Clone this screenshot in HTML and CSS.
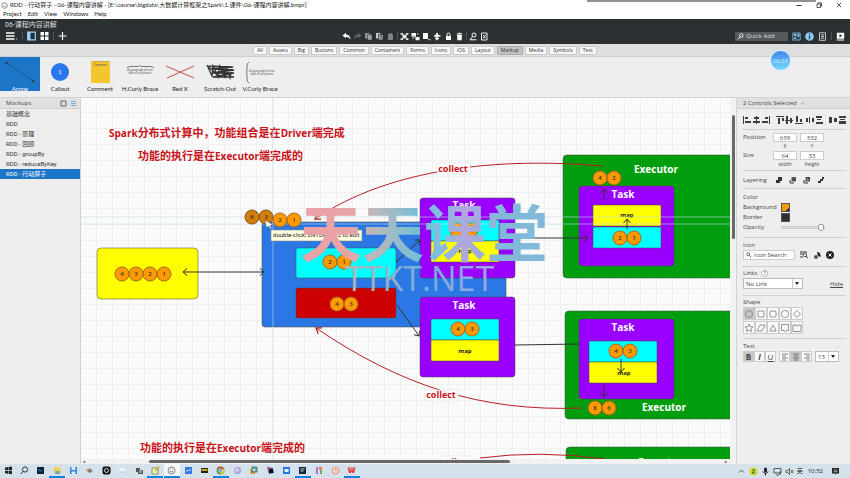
FILE: index.html
```html
<!DOCTYPE html>
<html lang="zh-CN">
<head>
<meta charset="utf-8">
<title>RDD - 行动算子</title>
<link rel="stylesheet" href="styles.css">
</head>
<body>
<header class="titlebar">
  <svg class="app-icon" viewBox="0 0 8 8"><circle cx="4" cy="4" r="3.3" fill="none" stroke="#666" stroke-width=".8"/><path d="M2.5 4.6q1.5 1.4 3 0M2.8 3h.4M4.9 3h.4" fill="none" stroke="#555" stroke-width=".7"/></svg>
  <span class="window-name">RDD - 行动算子 - 06-课程内容讲解 - [E:\course\bigdata\大数据计算框架之Spark\1.课件\06-课程内容讲解.bmpr]</span>
  <span class="top-line"></span>
  <div class="window-buttons">
    <button aria-label="Minimize"><svg viewBox="0 0 6 6"><path d="M.5 3.5h5" stroke="#333"/></svg></button>
    <button aria-label="Restore"><svg viewBox="0 0 6 6"><path d="M1 2h3.500v3.500H1zM2 2V.8h3.500v3.500H4.500" fill="none" stroke="#333" stroke-width=".8"/></svg></button>
    <button aria-label="Close"><svg viewBox="0 0 6 6"><path d="M.8.8l4.400 4.400M5.200.8L.8 5.200" stroke="#333" stroke-width=".8"/></svg></button>
  </div>
</header>
<nav class="menubar"><a href="#">Project</a><a href="#">Edit</a><a href="#">View</a><a href="#">Windows</a><a href="#">Help</a></nav>

<section class="toolbar">
  <h1>06-课程内容讲解</h1>
  <div class="tool-row">
    <div class="tools tools-left">
      <button aria-label="Menu"><svg width="12" height="10" viewBox="0 0 12 10"><path d="M0 2h8.500M0 5h8.500M0 8h8.500" stroke="#fff" stroke-width="1.600"/><path d="M9.500 7.500h2l-1 1.200z" fill="#ccc"/></svg></button>
      <i class="sep"></i>
      <button aria-label="Navigator"><svg width="9" height="10" viewBox="0 0 9 10"><path d="M.7 1.200h7.600v7.600H.7z" fill="#1e303b" stroke="#9bd2f5" stroke-width="1.200"/><path d="M1 1h2.500v8H1z" fill="#9bd2f5"/></svg></button>
      <button aria-label="Grid view"><svg width="9" height="10" viewBox="0 0 9 10" fill="#fff"><path d="M.5 1h3.500v3.500H.5zM5 1h3.500v3.500H5zM.5 5.500h3.500V9H.5zM5 5.500h3.500V9H5z"/></svg></button>
      <i class="sep"></i>
      <button aria-label="Add"><svg width="9" height="10" viewBox="0 0 9 10"><path d="M4.500 1v8M.5 5h8" stroke="#fff" stroke-width="1.200"/></svg></button>
    </div>
    <div class="tools tools-mid">
      <button aria-label="Undo"><svg viewBox="0 0 9 9"><path d="M.5 3.500L4 .8v1.700q4 .2 4.600 5Q6.800 4.800 4 4.800v1.500z" fill="#fff"/></svg></button>
      <button aria-label="Redo"><svg viewBox="0 0 9 9"><path d="M8.500 3.500L5 .8v1.700q-4 .2-4.600 5Q2.200 4.800 5 4.800v1.500z" fill="#62676b"/></svg></button>
      <button aria-label="Copy"><svg viewBox="0 0 9 9"><path d="M1 1h4.500v5.500H1z" fill="#8e9295"/><path d="M3.500 2.500H8V8H3.500z" fill="#9da1a3" stroke="#2b3033" stroke-width=".5"/></svg></button>
      <button aria-label="Paste"><svg viewBox="0 0 9 9"><path d="M1 1h4.500v5.500H1z" fill="#c5c7c8"/><path d="M3.500 2.500H8V8H3.500zM5 4h2M5 6h2" fill="#aaa" stroke="#2b3033" stroke-width=".7"/></svg></button>
      <button aria-label="Clipboard"><svg viewBox="0 0 9 9"><path d="M2 2h5v6H2zM3.500 1h2v1h-2z" fill="#7d8285"/></svg></button>
      <i class="sep"></i>
      <button aria-label="Group"><svg viewBox="0 0 9 9"><path d="M.5 1H3v1.500H.5zM6 1h2.500v1.500H6zM.5 6.500H3V8H.5zM6 6.500h2.500V8H6zM2.500 2.500h4v4h-4z" fill="#ddd"/><path d="M1 2l7 5.500M8 2L1 7.500" stroke="#fff" stroke-width=".6"/></svg></button>
      <button aria-label="Ungroup"><svg viewBox="0 0 9 9"><path d="M.5 1h4.500v3.500H.5zM4.500 5h4v3.200h-4z" fill="#fff"/><path d="M2 3l4 3.500M1 6h2M6 2h1.500" stroke="#ddd"/></svg></button>
      <button aria-label="Arrange"><svg viewBox="0 0 9 9"><path d="M1 1h5v6H1z" fill="#fff"/><path d="M6 7h2.500v1.200H6z" fill="#bbb"/></svg></button>
      <button aria-label="Align"><svg viewBox="0 0 9 9"><path d="M4 .8v7.500M1 4h6.500M2 6.500h4" stroke="#fff" stroke-width="1.300"/><circle cx="4" cy="3" r="1.500" fill="#fff"/></svg></button>
      <button aria-label="Lock"><svg viewBox="0 0 9 9"><path d="M2 4h5v4H2z" fill="#fff"/><path d="M3 4V2.500a1.500 1.500 0 013 0V4" fill="none" stroke="#fff"/></svg></button>
      <button aria-label="Delete"><svg viewBox="0 0 9 9"><path d="M2 3h5l-.4 5.200H2.400zM1.700 1.600h5.600v.9H1.700zM3.500.8h2v1h-2z" fill="#fff"/></svg></button>
      <i class="sep"></i>
      <button aria-label="Find"><svg viewBox="0 0 9 9"><circle cx="5" cy="3" r="2" fill="none" stroke="#fff"/><path d="M3.500 4.500L1 7.800h6.500" fill="none" stroke="#fff"/></svg></button>
      <button aria-label="Check"><svg viewBox="0 0 9 9"><path d="M1.500 1h5.500v7H1.500zM3 3l2.500 3M6 2.500L3 6.500" fill="none" stroke="#fff" stroke-width=".9"/></svg></button>
    </div>
    <div class="tools tools-right">
      <label class="quick-add"><svg viewBox="0 0 8 8"><circle cx="5" cy="3" r="2" fill="none" stroke="#fff"/><path d="M3.500 4.500L.8 7.300" stroke="#fff"/></svg><input aria-label="Quick Add" placeholder="Quick Add"></label>
      <button aria-label="Library"><svg viewBox="0 0 9 9"><path d="M.8 1h7.400v7H.8z" fill="#233947" stroke="#8cc8f0" stroke-width=".8"/><path d="M2 2h2.500v2H2zM5.500 2h1.800v3H5.500zM2 5.200h2.500v1.600H2z" fill="#8cc8f0"/></svg></button>
      <button aria-label="Inspector"><svg viewBox="0 0 9 9"><circle cx="4.500" cy="4.500" r="4.300" fill="#8ccaf4"/><path d="M4.500 3.600v3.600M4.500 1.600v1.200" stroke="#24445c" stroke-width="1.200"/></svg></button>
      <button aria-label="Notes"><svg viewBox="0 0 9 9"><path d="M1.500.8h6v7.500h-6zM3 3h3M3 4.600h3M3 6.200h3" fill="none" stroke="#eee" stroke-width=".8"/></svg></button>
      <i class="sep"></i>
      <button aria-label="Present"><svg viewBox="0 0 9 9"><path d="M.8.8h7.400v5.900H.8zM.8 7.400h7.400v1H.8z" fill="#fff"/><path d="M3.500 2v3.500l2.700-1.700z" fill="#222"/></svg></button>
    </div>
  </div>
</section>

<nav class="categories">
  <button>All</button><button>Assets</button><button>Big</button><button>Buttons</button><button>Common</button><button>Containers</button><button>Forms</button><button>Icons</button><button>iOS</button><button>Layout</button><button class="active">Markup</button><button>Media</button><button>Symbols</button><button>Text</button>
</nav>

<section class="gallery">
  <button class="active"><svg viewBox="0 0 40 28"><path d="M6 6l27 18" stroke="#234f78" stroke-width=".8"/><circle cx="6.500" cy="6" r="1.300" fill="#24405c"/><circle cx="33" cy="24" r="1.300" fill="#24405c"/></svg><span>Arrow</span></button>
  <button><svg viewBox="0 0 40 28"><circle cx="20" cy="15" r="9" fill="#2a76ea"/><text x="20" y="17" class="tiny white">1</text></svg><span>Callout</span></button>
  <button><svg viewBox="0 0 40 28"><path d="M11 4h19v22H11z" fill="#f3c62f"/><path d="M12 4h17v1H12z" fill="#c9a94a"/><text x="20" y="9" class="micro">Comment</text></svg><span>Comment</span></button>
  <button><svg viewBox="0 0 40 28"><path d="M7 11q1-1.500 4-1.500h6q3 0 3-1 0 1 3 1h7q3 0 4 1.500" fill="none" stroke="#555" stroke-width=".8"/><text x="20" y="14" class="micro">A paragraph of text</text><text x="20" y="17" class="micro">with a curly brace</text></svg><span>H.Curly Brace</span></button>
  <button><svg viewBox="0 0 40 28"><path d="M6 9l28 12M7 21L34 9" stroke="#d04a4a" stroke-width="1"/></svg><span>Red X</span></button>
  <button><svg viewBox="0 0 40 28"><path d="M7 9l26 1-23 2 24 1-22 3 22 0-21 4 21 0M7 8l5 11 1-10 5 11 2-11 5 12 1-11 4 11 2-9M9 10l8 8M18 9l9 11" fill="none" stroke="#333" stroke-width="1.300"/></svg><span>Scratch-Out</span></button>
  <button><svg viewBox="0 0 40 28"><path d="M9 5q-2 1-2 4v3q0 3-1 3 1 0 1 3v4q0 3 2 4" fill="none" stroke="#555" stroke-width=".8"/><text x="22" y="15" class="micro">A paragraph of text</text><text x="22" y="18" class="micro">with a curly brace</text></svg><span>V.Curly Brace</span></button>
  <div class="timer">06:35</div>
</section>

<main class="workspace">
  <aside class="mockups">
    <header class="panel-head"><h2>Mockups</h2>
      <button aria-label="Thumbnails"><svg viewBox="0 0 7 7"><path d="M1 1h5v5H1z" fill="none" stroke="#444" stroke-width=".8"/></svg></button>
      <button aria-label="List"><svg viewBox="0 0 7 7"><path d="M1 1.500h5M1 3.500h5M1 5.500h5" stroke="#5ba0e0" stroke-width=".8"/></svg></button>
    </header>
    <ul><li><a href="#">基础概念</a></li><li><a href="#">RDD</a></li><li><a href="#">RDD - 原理</a></li><li><a href="#">RDD - 回顾</a></li><li><a href="#">RDD - groupBy</a></li><li><a href="#">RDD - reduceByKey</a></li><li><a href="#" class="active">RDD - 行动算子</a></li></ul>
  </aside>

  <section class="canvas-area">
    <svg class="canvas" aria-label="Spark diagram">
      <defs>
        <pattern id="grid" width="16" height="16" patternUnits="userSpaceOnUse"><path d="M5.500 0v16M10.500 0v16M0 5.500h16M0 10.500h16" stroke="#f7f8f8"/><path d="M.5 0v16M0 .5h16" stroke="#f0f2f2"/></pattern>
        <marker id="tip" viewBox="0 0 8 8" refX="6.500" refY="4" markerWidth="8" markerHeight="8" markerUnits="userSpaceOnUse" orient="auto-start-reverse"><path d="M2.500.5l4 3.500-4 3.500" fill="none" stroke="#333"/></marker>
        <marker id="red-tip" viewBox="0 0 8 8" refX="6.500" refY="4" markerWidth="8" markerHeight="8" markerUnits="userSpaceOnUse" orient="auto-start-reverse"><path d="M1.500.5l5 3.500-5 3.500" fill="none" stroke="#b81e24" stroke-width="1.300"/></marker>
        <linearGradient id="brand" gradientUnits="userSpaceOnUse" x1="300" y1="0" x2="550" y2="0"><stop offset="0" stop-color="#eba0a4"/><stop offset=".2" stop-color="#e8a4a8"/><stop offset=".3" stop-color="#b9b9bb"/><stop offset=".48" stop-color="#72bfd7"/><stop offset=".56" stop-color="#86bce0"/><stop offset=".66" stop-color="#b3a6df"/><stop offset=".8" stop-color="#82b9d8"/><stop offset="1" stop-color="#82b9d8"/></linearGradient>
        <linearGradient id="site" gradientUnits="userSpaceOnUse" x1="345" y1="0" x2="505" y2="0"><stop offset="0" stop-color="#b5b5b9"/><stop offset=".5" stop-color="#72aedd"/><stop offset="1" stop-color="#a9a2e4"/></linearGradient>
      </defs>
      <g transform="translate(-81 -98)">
        <rect x="81" y="98" width="2000" height="2000" fill="url(#grid)"/>
        <g class="note">
          <text x="109" y="137"><tspan class="latin">Spark</tspan>分布式计算中，功能组合是在<tspan class="latin">Driver</tspan>端完成</text>
          <text x="138" y="160">功能的执行是在<tspan class="latin">Executor</tspan>端完成的</text>
          <text x="140" y="452">功能的执行是在<tspan class="latin">Executor</tspan>端完成的</text>
        </g>
        <rect class="box yellow" x="97" y="248" width="101" height="51" rx="4"/>
        <g class="ball"><circle cx="122" cy="274" r="7"/><text x="122" y="276">4</text><circle cx="136" cy="274" r="7"/><text x="136" y="276">3</text><circle cx="150" cy="274" r="7"/><text x="150" y="276">2</text><circle cx="164" cy="274" r="7"/><text x="164" y="276">1</text></g>
        <rect class="box blue" x="262" y="222" width="244" height="105" rx="3"/>
        <rect class="box cyan" x="296" y="248" width="100" height="30" rx="2"/>
        <rect class="box red" x="296" y="288" width="100" height="30" rx="2"/>
        <g class="ball"><circle cx="330" cy="262" r="7"/><text x="330" y="264">2</text><circle cx="344" cy="262" r="7"/><text x="344" y="264">1</text><circle cx="337" cy="304" r="7"/><text x="337" y="306">4</text><circle cx="351" cy="304" r="7"/><text x="351" y="306">3</text></g>

        <rect class="box purple" x="420" y="198" width="95" height="80" rx="3"/>
        <text class="label" x="464" y="209">Task</text>
        <rect class="box cyan" x="431" y="220" width="68" height="21" rx="1"/><rect class="box yellow" x="431" y="241" width="68" height="21" rx="1"/>
        <g class="ball"><circle cx="457" cy="230" r="7"/><text x="457" y="232">2</text><circle cx="471" cy="230" r="7"/><text x="471" y="232">1</text></g>
        <text class="map" x="465" y="253">map</text>
        <rect class="box purple" x="420" y="297" width="95" height="80" rx="3"/>
        <text class="label" x="464" y="309">Task</text>
        <rect class="box cyan" x="431" y="319" width="68" height="21" rx="1"/><rect class="box yellow" x="431" y="340" width="68" height="21" rx="1"/>
        <g class="ball"><circle cx="458" cy="329" r="7"/><text x="458" y="331">4</text><circle cx="472" cy="329" r="7"/><text x="472" y="331">3</text></g>
        <text class="map" x="465" y="353">map</text>

        <rect class="box green" x="563" y="155" width="2000" height="123" rx="4"/>
        <text class="label" x="656" y="173">Executor</text>
        <g class="ball"><circle cx="600" cy="178" r="7"/><text x="600" y="180">4</text><circle cx="614" cy="178" r="7"/><text x="614" y="180">2</text></g>
        <rect class="box purple" x="579" y="186" width="95" height="80" rx="3"/>
        <text class="label" x="623" y="198">Task</text>
        <rect class="box yellow" x="593" y="205" width="68" height="21" rx="1"/><rect class="box cyan" x="593" y="227" width="68" height="21" rx="1"/>
        <g class="ball"><circle cx="620" cy="238" r="7"/><text x="620" y="240">2</text><circle cx="634" cy="238" r="7"/><text x="634" y="240">1</text></g>
        <text class="map" x="627" y="217">map</text>

        <rect class="box green" x="565" y="311" width="2000" height="108" rx="4"/>
        <rect class="box purple" x="579" y="319" width="95" height="80" rx="3"/>
        <text class="label" x="623" y="331">Task</text>
        <rect class="box cyan" x="589" y="341" width="68" height="21" rx="1"/><rect class="box yellow" x="589" y="362" width="68" height="21" rx="1"/>
        <g class="ball"><circle cx="616" cy="351" r="7"/><text x="616" y="353">4</text><circle cx="630" cy="351" r="7"/><text x="630" y="353">3</text><circle cx="595" cy="408" r="7"/><text x="595" y="410">8</text><circle cx="609" cy="408" r="7"/><text x="609" y="410">6</text></g>
        <text class="map" x="624" y="375">map</text>
        <text class="label" x="664" y="411">Executor</text>
        <rect class="box green" x="566" y="447" width="2000" height="108" rx="4"/>
        <text class="label" x="660" y="466">Executor</text>

        <g class="link">
          <path d="M183 272H264" marker-start="url(#tip)" marker-end="url(#tip)"/>
          <path d="M396 262L420 240" marker-end="url(#tip)"/><path d="M397 305L419 336" marker-end="url(#tip)"/>
          <path d="M515 238H588" marker-end="url(#tip)"/><path d="M515 345L580 344"/>
          <path d="M627 229V219" marker-end="url(#tip)"/><path d="M604 200V189" marker-end="url(#tip)"/>
          <path d="M621 359V372" marker-end="url(#tip)"/><path d="M604 384V397" marker-end="url(#tip)"/>
        </g>
        <g class="collect">
          <path d="M602 166C500 157 390 168 315 219" marker-end="url(#red-tip)"/>
          <path d="M582 408C480 412 400 385 316 328" marker-end="url(#red-tip)"/>
          <path d="M480 458Q540 450 605 459"/>
          <rect x="437" y="163" width="33" height="11"/><text x="453" y="172">collect</text>
          <rect x="425" y="390" width="33" height="11"/><text x="441" y="398">collect</text>
          <rect x="441" y="456" width="31" height="11"/><text x="456" y="465">collect</text>
        </g>
        <path class="guide" d="M81 217H2000M81 224H2000M273 98V2000"/>
        <g class="ball selected"><circle cx="252" cy="217" r="7"/><text x="252" y="219">6</text><circle cx="266" cy="217" r="7"/><text x="266" y="219">3</text></g>
        <g class="ball"><circle cx="280" cy="220" r="7"/><text x="280" y="222">2</text><circle cx="294" cy="220" r="7"/><text x="294" y="222">1</text></g>
        <path d="M265 220l8 5-3 .5 2 3-1.500.5-2-3-2 2z" fill="#fff" stroke="#456" stroke-width=".5"/>
        <rect class="tip" x="271" y="230" width="91" height="11"/><text class="tip-text" x="273" y="237">double-click, ENTER or F2 to edit</text>
        <text class="brand" x="300" y="257">天天课堂</text>
        <text class="site" x="345" y="291">TTKT.NET</text>
      </g>
    </svg>
    <div class="scroll-y"><i></i></div>
    <div class="scroll-x"><b>◂</b><i></i><b>▸</b></div>
  </section>

  <aside class="inspector">
    <header class="panel-head"><h2>2 Controls Selected</h2><svg class="chevron" viewBox="0 0 5 5"><path d="M1 2l1.500 1L4 2" fill="none" stroke="#888" stroke-width=".7"/></svg></header>
    <section class="aligns">
      <svg viewBox="0 0 104 9" fill="#3a3f42"><path d="M0 0h1v8H0zM2 1h3v2H2zM2 5h6v2H2zM13 0h1v8h-1zM11 1h5v2h-5zM10 5h7v2h-7zM26 0h1v8h-1zM22 1h3v2h-3zM19 5h6v2h-6zM33 0h8v1h-8zM35 2h2v6h-2zM39 2h2v3h-2zM42 4h8v1h-8zM43 0h2v8h-2zM47 2h2v5h-2zM52 7h8v1h-8zM53 0h2v6h-2zM57 3h2v3h-2zM63 2h2v4h-2zM66 1h1v6h-1zM69 2h2v4h-2zM73 0h6v2h-6zM74 3h4v1h-4zM73 6h7v2h-7zM86 1h3v6h-3zM91 2h3v4h-3zM96 0h7v2h-7zM97 3h5v1h-5zM96 5h7v3h-7z"/></svg>
    </section>
    <section class="geometry">
      <span>Position</span><label><input value="639">X</label><label><input value="332">Y</label>
      <span>Size</span><label><input value="64">width</label><label><input value="33">height</label>
    </section>
    <section class="layering"><span>Layering</span>
      <button aria-label="To front"><svg viewBox="0 0 8 8"><path d="M3 1h4v4H3zM1 4h2v1h2v2H1z" fill="#333"/></svg></button>
      <button aria-label="Forward"><svg viewBox="0 0 8 8"><path d="M2.500 1H7v4.500H2.500z" fill="#555"/><path d="M1 4v3h4M4 3.500h2" fill="none" stroke="#333"/></svg></button>
      <button aria-label="Backward"><svg viewBox="0 0 8 8"><path d="M2.500 1H7v4.500H2.500z" fill="#444"/><path d="M1 4v3h4" fill="none" stroke="#333"/><path d="M4 2v2h2" stroke="#ddd" fill="none" stroke-width=".6"/></svg></button>
      <button aria-label="To back"><svg viewBox="0 0 8 8"><path d="M5 1h2v2H5zM3 3h3v2H3zM1 5h3v2H1z" fill="#333"/></svg></button>
    </section>
    <section class="colors">
      <h3>Color</h3>
      <div><span>Background</span><button class="swatch orange" aria-label="Background color"></button></div>
      <div><span>Border</span><button class="swatch dark" aria-label="Border color"></button></div>
      <div><label for="opacity">Opacity</label><input id="opacity" type="range" value="100"></div>
    </section>
    <section class="icons"><h3>Icon</h3>
      <div><label class="search"><svg viewBox="0 0 8 8"><circle cx="3" cy="3" r="2" fill="none" stroke="#333"/><path d="M4.500 4.500L7 7" stroke="#333"/></svg><input aria-label="Icon Search" placeholder="Icon Search"></label>
      <svg viewBox="0 0 8 8"><path d="M0 1h7M0 3h3M0 6h3" stroke="#333"/><circle cx="5" cy="4" r="1.700" fill="none" stroke="#333" stroke-width=".8"/><path d="M6 5l2 2.500" stroke="#333"/></svg>
      <svg viewBox="0 0 8 8"><circle cx="3" cy="6" r="2" fill="#555"/><path d="M4 1q4 0 3.500 5L5 5z" fill="#222"/></svg>
      <svg viewBox="0 0 8 8"><circle cx="4" cy="4" r="4" fill="#222"/><path d="M2.500 2.500l3 3M5.500 2.500l-3 3" stroke="#fff"/></svg></div>
    </section>
    <section class="links"><h3>Links <button aria-label="Help">?</button></h3>
      <div><span class="select"><select aria-label="Link"><option>No Link</option></select></span><a href="#">Hide</a></div>
    </section>
    <section class="shapes"><h3>Shape</h3>
      <div class="shape-grid">
        <button class="active" aria-label="Circle"><svg viewBox="0 0 10 10"><circle cx="5" cy="5" r="3.500"/></svg></button>
        <button aria-label="Square"><svg viewBox="0 0 10 10"><path d="M2 2h6v6H2z"/></svg></button>
        <button aria-label="Rounded square"><svg viewBox="0 0 10 10"><rect x="2" y="2" width="6" height="6" rx="1"/></svg></button>
        <button aria-label="Rounded"><svg viewBox="0 0 10 10"><rect x="1.500" y="1.500" width="7" height="7" rx="3"/></svg></button>
        <button aria-label="Diamond"><svg viewBox="0 0 10 10"><path d="M5 1.500L8.500 5 5 8.500 1.500 5z"/></svg></button>
        <button aria-label="Star"><svg viewBox="0 0 10 10"><path d="M5 1l1.100 2.700 2.900.2-2.200 1.900.7 2.900L5 7.100 2.500 8.700l.7-2.900L1 3.900l2.900-.2z"/></svg></button>
        <button aria-label="Parallelogram"><svg viewBox="0 0 10 10"><path d="M4 2h5L6 8H1z"/></svg></button>
        <button aria-label="Triangle"><svg viewBox="0 0 10 10"><path d="M5 2l3.200 6H1.800z"/></svg></button>
        <button aria-label="Speech"><svg viewBox="0 0 10 10"><path d="M1.500 1.500h7v6H7L5.500 8.500 4 7.500H1.500z"/></svg></button>
        <button aria-label="Folder"><svg viewBox="0 0 10 10"><path d="M1 2h3l1 1.500L6 2h3v6.500H1z"/></svg></button>
      </div>
    </section>
    <section class="text-tools"><h3>Text</h3>
      <div>
        <div class="group"><button class="active"><b>B</b></button><button class="italic"><em>I</em></button><button><u>U</u></button></div>
        <div class="group"><button aria-label="Left"><svg viewBox="0 0 8 8"><path d="M1 1h6M1 3h4M1 5h6M1 7h4"/></svg></button><button class="active" aria-label="Center"><svg viewBox="0 0 8 8"><path d="M1 1h6M2 3h4M1 5h6M2 7h4"/></svg></button><button aria-label="Right"><svg viewBox="0 0 8 8"><path d="M1 1h6M3 3h4M1 5h6M3 7h4"/></svg></button></div>
        <span class="select small"><select aria-label="Text size"><option>13</option></select></span>
      </div>
    </section>
  </aside>
</main>

<footer class="taskbar">
  <div class="apps">
    <button aria-label="Start"><svg viewBox="0 0 9 9" fill="#222"><path d="M1 1.500l3-.4v3H1zM4.500 1L8 .6v3.500H4.500zM1 4.700h3v3l-3-.4zM4.500 4.700H8v3.500l-3.500-.4z"/></svg></button>
    <button aria-label="Search"><svg viewBox="0 0 9 9"><circle cx="5" cy="3.500" r="2.600" fill="none" stroke="#333"/><path d="M3 5.500L.8 8" stroke="#333"/></svg></button>
    <button aria-label="Photoshop"><svg viewBox="0 0 9 9"><path d="M1 1h7v7H1z" fill="#08253c"/><text x="4" y="6" class="micro cyan-text">Ps</text></svg></button>
    <button class="open" aria-label="Files"><svg viewBox="0 0 9 9"><path d="M1 1h3l1 1h3v6H1z" fill="#eed24d"/><path d="M2.500 5h4v3h-4z" fill="#5ba6d8"/></svg></button>
    <button aria-label="Save"><svg viewBox="0 0 9 9"><path d="M1 1h7v7H1z" fill="#3385d6"/><path d="M2.500 1h4v3h-4zM2.500 5.500h4V8h-4z" fill="#d5eaff"/></svg></button>
    <button aria-label="Paint"><svg viewBox="0 0 9 9"><path d="M1 4l4-2 3 3-4 2z" fill="#d48b46"/><circle cx="5" cy="5" r="1.500" fill="#4c82b8"/></svg></button>
    <button aria-label="Unity"><svg viewBox="0 0 9 9"><rect x=".5" y=".5" width="8" height="8" rx="2" fill="#111"/><circle cx="4.500" cy="4.500" r="2" fill="none" stroke="#ddd"/></svg></button>
    <button aria-label="Cloud"><svg viewBox="0 0 9 9"><ellipse cx="4.500" cy="4" rx="3.500" ry="2" fill="#eef3f6"/><path d="M2 6h5" stroke="#bac6cf"/></svg></button>
    <button aria-label="Camera"><svg viewBox="0 0 9 9"><path d="M1 2h4v2h3v4H3V6H1z" fill="#555"/><circle cx="5.500" cy="5.500" r="1.500" fill="#aaa"/></svg></button>
    <button class="open" aria-label="Notes"><svg viewBox="0 0 9 9"><path d="M1 2h6v6H1z" fill="#f4f4c7" stroke="#7b9858"/><path d="M8 .5L4 5" stroke="#d2a62b" stroke-width="1.500"/></svg></button>
    <button class="open current" aria-label="Balsamiq"><svg viewBox="0 0 9 9"><circle cx="4.500" cy="4.500" r="3.500" fill="none" stroke="#666" stroke-width=".8"/><path d="M2.500 5q2 2 4 0M3 3.200h.7M5.300 3.200H6" fill="none" stroke="#666" stroke-width=".8"/></svg></button>
    <button aria-label="Documents"><svg viewBox="0 0 9 9"><path d="M1 1h7v7H1z" fill="#3a78df"/><path d="M2 6l2-2 1 1 2-2" fill="none" stroke="#c3dcff"/></svg></button>
    <button aria-label="Terminal"><svg viewBox="0 0 9 9"><path d="M1 2h7v5H1z" fill="#28240c"/><path d="M1.500 3h6v2h-6z" fill="#c8a623"/></svg></button>
    <button class="open" aria-label="Chrome"><svg viewBox="0 0 9 9"><circle cx="4.500" cy="4.500" r="4" fill="#43a853"/><path d="M1 2.500a4 4 0 017 0l-3.500 1z" fill="#dc493d"/><path d="M8 2.500A4 4 0 014.500 8.500l1-4z" fill="#edc52f"/><circle cx="4.500" cy="4.500" r="1.700" fill="#4d8df0" stroke="#fff" stroke-width=".6"/></svg></button>
    <button aria-label="Browser"><svg viewBox="0 0 9 9"><circle cx="4.500" cy="4.500" r="3.700" fill="#b4a9de"/><circle cx="4" cy="4" r="1.800" fill="#d8d4f0"/></svg></button>
    <button aria-label="VMware"><svg viewBox="0 0 9 9"><path d="M1 3h5v5H1z" fill="#e3a33a"/><path d="M3 1h5v5H3z" fill="#67a6c9" stroke="#467f57"/><path d="M4 3h2v2H4z" fill="#ddd"/></svg></button>
    <button aria-label="IDEA"><svg viewBox="0 0 9 9"><path d="M1 1l6 1 1 5-5 1z" fill="#3469b3"/><path d="M1 1l3 0-1 5z" fill="#df4c72"/><path d="M3 3h4v4H3z" fill="#111"/></svg></button>
    <button aria-label="Cloud disk"><svg viewBox="0 0 9 9"><path d="M1 1h7v7H1z" fill="#2478e0"/><path d="M2.500 3h4v3h-4z" fill="#e9f4ff"/></svg></button>
    <button class="open" aria-label="Editor"><svg viewBox="0 0 9 9"><path d="M1 1h7v7H1z" fill="#142b35"/><path d="M2.500 3h4M2.500 5h3" stroke="#b7d6df"/></svg></button>
    <button aria-label="Slides"><svg viewBox="0 0 9 9"><path d="M1 1h2v7H1z" fill="#ad75c5"/><path d="M4 1h3v3H4z" fill="#e87d51"/><path d="M5 4h2v4H5z" fill="#71aa76"/></svg></button>
    <button aria-label="Clock"><svg viewBox="0 0 9 9"><circle cx="4.500" cy="4.500" r="3.500" fill="#f8d9cd" stroke="#e58b71"/><path d="M4.500 2.500v2H6" fill="none" stroke="#e07050" stroke-width=".7"/></svg></button>
    <button class="open" aria-label="WPS"><svg viewBox="0 0 9 9"><path d="M.5 1.500h8L7 7H5L4.500 5 4 7H2z" fill="#de3d3d"/><path d="M2 3h5" stroke="#fff" stroke-width=".7"/></svg></button>
  </div>
  <div class="tray">
    <svg viewBox="0 0 9 9"><path d="M2 5.500L4.500 3 7 5.500" fill="none" stroke="#333" stroke-width=".8"/></svg>
    <svg viewBox="0 0 9 9"><circle cx="4.500" cy="4.500" r="4" fill="#d6d72a"/><path d="M3 3h3L3 6h3" fill="none" stroke="#276c43"/></svg>
    <svg viewBox="0 0 9 9"><rect x="3" y=".5" width="3" height="5" rx="1.500" fill="#222"/><path d="M2 4.500q2.500 4 5 0M4.500 6v2.500" fill="none" stroke="#222"/></svg>
    <svg viewBox="0 0 9 9"><path d="M1 1.500h7v4.500H1zM3 8h3M7 4v4" fill="none" stroke="#333" stroke-width=".8"/></svg>
    <svg viewBox="0 0 9 9"><path d="M1 3.500h1.500l2-2v6l-2-2H1zM6 3l2 3M8 3L6 6" fill="none" stroke="#333" stroke-width=".7"/></svg>
    <span>英</span><time>10:52</time>
    <svg viewBox="0 0 9 9"><path d="M1 1h7v5.500H5.500L4.500 8V6.500H1z" fill="#222"/><path d="M2.500 3h4M2.500 4.700h4" stroke="#fff" stroke-width=".6"/></svg>
  </div>
</footer>
</body>
</html>
```
FILE: styles.css
```css
* { box-sizing: border-box; }
body { margin: 0; height: 100vh; display: flex; flex-direction: column; overflow: hidden; background: #fff; color: #444; font: 6px/8px "Open Sans", "Noto Sans CJK SC", sans-serif; }
button, input, select { font: inherit; color: inherit; margin: 0; padding: 0; border: 0; background: none; min-width: 0; }
button { display: flex; align-items: center; justify-content: center; }
h1, h2, h3, ul { margin: 0; padding: 0; font-size: inherit; font-weight: 400; }
a { color: inherit; text-decoration: none; }
svg { display: block; flex: none; }
em, u, b { line-height: 8px; }

.titlebar { position: relative; flex: none; height: 10px; display: flex; align-items: center; padding-left: 1px; gap: 2px; color: #222; font-family: Lato, "Noto Sans CJK SC", sans-serif; }
.app-icon { width: 7px; height: 7px; }
.window-name { flex: 1; white-space: nowrap; }
.top-line { position: absolute; top: 0; left: 69%; right: 4%; height: 2px; background: #929292; }
.window-buttons { display: flex; gap: 14px; padding-right: 8px; }
.window-buttons svg { width: 6px; height: 6px; }
.menubar { flex: none; height: 9px; display: flex; gap: 6px; padding-left: 3px; color: #222; font-family: Lato, sans-serif; }

.toolbar { flex: none; height: 25px; padding-top: 2px; background: #2b3033; color: #ddd; }
.toolbar h1 { padding-left: 5px; line-height: 9px; font-size: 7px; font-family: Roboto, "Noto Sans CJK SC", sans-serif; }
.tool-row { display: grid; grid-template-columns: 1fr auto 1fr; align-items: center; height: 12px; }
.tools { display: flex; align-items: center; }
.tools-left { gap: 4px; padding-left: 6px; }
.tools-mid { gap: 2px; padding-right: 20px; }
.tools-mid svg, .tools-right svg { width: 9px; height: 9px; }
.tools-right { justify-content: flex-end; gap: 4px; padding-right: 5px; }
.sep { width: 1px; height: 8px; background: #50575b; }
.quick-add { display: flex; align-items: center; gap: 2px; width: 53px; height: 9px; padding-left: 2px; background: #54595c; }
.quick-add svg { width: 7px; height: 7px; }
.quick-add input { flex: 1; }
input::placeholder { color: inherit; opacity: 1; }

.categories { flex: none; height: 13px; display: flex; justify-content: center; align-items: center; gap: 2px; background: #dedede; border-bottom: 1px solid #cfcfcf; font-size: 5px; font-family: "Open Sans", sans-serif; color: #333; }
.categories button { height: 9px; padding: 0 3px; border: 1px solid #c8c8c8; border-radius: 1px; background: #f8f8f8; }
.categories .active { background: #c3c3c3; border-color: #aaa; }

.gallery { position: relative; flex: none; height: 41px; display: flex; background: #eee; border-bottom: 1px solid #d2d2d2; font-family: Lato, sans-serif; }
.gallery button { flex-direction: column; justify-content: flex-start; width: 40px; height: 34px; color: #222; white-space: nowrap; }
.gallery button svg { width: 40px; height: 28px; }
.gallery button span { line-height: 7px; }
.gallery .active { background: #1d75c8; color: #fff; }
.tiny { font-size: 6px; text-anchor: middle; }
.white { fill: #fff; }
.micro { font-size: 3px; text-anchor: middle; fill: #555; }
.cyan-text { fill: #5dc4ff; }
.timer { position: absolute; right: 59px; top: -7px; width: 21px; height: 21px; border: 1px solid #d8efff; border-radius: 50%; background: linear-gradient(#3b86ec, #74dcfa); color: #d8edff; line-height: 19px; text-align: center; }

.workspace { flex: 1; min-height: 0; display: flex; }
.panel-head { display: flex; align-items: center; gap: 3px; height: 11px; background: #e1e1e1; border-bottom: 1px solid #d0d0d0; }
.panel-head h2 { flex: 1; }
.mockups { flex: none; width: 81px; background: #ededed; border-right: 1px solid #d2d2d2; }
.mockups .panel-head { padding: 0 3px 0 6px; }
.mockups .panel-head svg { width: 7px; height: 7px; }
.mockups ul { list-style: none; font-family: Roboto, "Noto Sans CJK SC", sans-serif; }
.mockups a { display: block; padding-left: 6px; line-height: 10px; color: #333; }
.mockups .active { background: #1d75c8; color: #fff; }

.canvas-area { flex: 1; min-width: 0; display: grid; grid-template: 1fr 5px / 1fr 6px; background: #fbfbfb; }
.canvas { width: 100%; height: 100%; overflow: hidden; }
.scroll-y { background: #f2f2f2; padding-top: 17px; display: flex; justify-content: center; }
.scroll-y i { width: 3px; height: 36%; background: #686868; border-radius: 2px; }
.scroll-x { grid-column: 1 / 3; display: flex; align-items: center; background: #f2f2f2; padding: 0 9px 0 2px; }
.scroll-x b { font-size: 4px; line-height: 5px; }
.scroll-x i { width: 56%; height: 3px; margin: 0 auto 0 10%; background: #686868; border-radius: 2px; }

.note { font: 700 11px "Noto Sans CJK SC", sans-serif; fill: #c81219; }
.latin { font: 700 10px "Open Sans", sans-serif; }
.box { stroke: #444; stroke-opacity: .5; }
.yellow { fill: #ff0; }
.blue { fill: #2b78e4; }
.cyan { fill: #0ff; }
.red { fill: #c00; }
.purple { fill: #90f; }
.green { fill: #009e0f; }
.ball { font: 600 6px "Open Sans", sans-serif; text-anchor: middle; fill: #333; }
.ball circle { fill: #ff9900; stroke: #a5671e; }
.selected circle { fill: #d27e0d; stroke: #875317; }
.label { font: 700 10px "Open Sans", sans-serif; text-anchor: middle; fill: #fff; }
.map { font: 700 6px "Open Sans", sans-serif; text-anchor: middle; fill: #222; }
.link path { fill: none; stroke: #333; }
.collect { font: 700 9px "Open Sans", sans-serif; text-anchor: middle; fill: #c81219; }
.collect path { fill: none; stroke: #b81e24; }
.collect rect { fill: #fff; fill-opacity: .85; stroke: #ddd; stroke-opacity: .5; }
.guide { fill: none; stroke: #c3d9df; stroke-opacity: .6; }
.tip { fill: #ffffe4; stroke: #888; stroke-opacity: .6; }
.tip-text { font-size: 6px; font-family: Roboto, sans-serif; fill: #222; }
.brand { font: 700 62px "Noto Sans CJK SC", sans-serif; fill: url(#brand); }
.site { font: 400 34px "Open Sans", sans-serif; fill: url(#site); }

.inspector { flex: none; width: 114px; background: #eee; border-left: 1px solid #d2d2d2; }
.inspector .panel-head { padding-left: 6px; }
.inspector .panel-head h2 { flex: none; }
.chevron { width: 5px; height: 5px; }
.inspector section { margin: 0 4px 0 6px; border-bottom: 1px solid #d0d0d0; }
.inspector .text-tools { border: 0; }
.inspector h3 { line-height: 10px; }
.inspector section > div { display: flex; align-items: center; }
.inspector .aligns { padding: 7px 0 4px; }
.aligns svg { width: 104px; height: 9px; }
.inspector .geometry { display: grid; grid-template-columns: 27px 24px 24px; gap: 1px 3px; padding: 3px 0 2px; line-height: 9px; }
.geometry label { display: flex; flex-direction: column; align-items: center; font-size: 5px; line-height: 8px; }
.geometry input { width: 100%; height: 9px; border: 1px solid #ccc; background: #fff; text-align: center; font-size: 6px; }
.layering { display: flex; align-items: center; gap: 6px; height: 18px; }
.layering span { width: 26px; }
.layering svg, .icons > div > svg { width: 8px; height: 8px; }
.inspector .colors { padding: 3px 0 5px; }
.colors > div { height: 10px; }
.colors span, .colors label { width: 38px; }
.swatch { width: 9px; height: 9px; border: 1px solid #555; }
.orange { background: linear-gradient(135deg, #f90 75%, #333 75%); }
.dark { background: #2b3338; }
.colors input { width: 44px; height: 8px; appearance: none; }
.colors input::-webkit-slider-runnable-track { height: 3px; border: 1px solid #ccc; background: #ddd; }
.colors input::-webkit-slider-thumb { appearance: none; width: 6px; height: 7px; margin-top: -3px; border: 1px solid #999; border-radius: 2px 2px 3px 3px; background: #fff; }
.inspector .icons { padding: 2px 0 6px; }
.icons > div { gap: 5px; }
.search { display: flex; align-items: center; gap: 2px; width: 52px; height: 10px; padding-left: 2px; border: 1px solid #ccc; background: #fff; }
.search svg { width: 6px; height: 6px; }
.search input { flex: 1; width: 0; }
.inspector .links { height: 29px; padding-top: 1px; }
.links h3 { display: flex; align-items: center; gap: 4px; }
.links h3 button { width: 7px; height: 7px; border: 1px solid #bbb; border-radius: 50%; background: #fff; font-size: 5px; }
.links > div { justify-content: space-between; padding-right: 3px; }
.links a { text-decoration: underline; }
.select { position: relative; display: flex; width: 60px; height: 11px; border: 1px solid #bbb; background: #fff; }
.select select { width: 100%; padding-left: 2px; appearance: none; }
.select::after { content: ""; position: absolute; right: 3px; top: 3px; border: 2px solid transparent; border-top: 3px solid #222; }
.select::before { content: ""; position: absolute; right: 9px; top: 0; bottom: 0; border-left: 1px solid #ccc; }
.small { width: 24px; height: 11px; }
.inspector .shapes { height: 43px; padding-top: 1px; }
.inspector .shape-grid { display: grid; grid-template-columns: repeat(5, 12px); gap: 1px 0; }
.shape-grid button, .group button { border: 1px solid #ccc; background: #fafafa; }
.shape-grid button { height: 13px; }
.shape-grid svg { width: 10px; height: 10px; fill: none; stroke: #777; stroke-width: .8px; }
.inspector .active { background: #c6c6c6; }
.text-tools { padding-top: 2px; }
.inspector .text-tools > div { gap: 3px; }
.group { display: flex; }
.group button { width: 11px; height: 11px; font-size: 8px; }
.group .italic { font-weight: 700; }
.group svg { width: 8px; height: 8px; stroke: #666; stroke-width: .8px; }

.taskbar { flex: none; height: 14px; display: flex; justify-content: space-between; background: #d5e2ec; }
.apps { display: flex; justify-content: space-between; width: 42%; min-width: 360px; }
.apps button { width: 16px; border-bottom: 2px solid transparent; }
.apps svg, .tray svg { width: 9px; height: 9px; }
.apps .open { border-color: #1685e0; }
.apps .current { background: #f3f7fa; }
.tray { display: flex; align-items: center; gap: 3px; padding-right: 10px; color: #222; }
.tray time { margin: 0 5px 0 2px; }
```
